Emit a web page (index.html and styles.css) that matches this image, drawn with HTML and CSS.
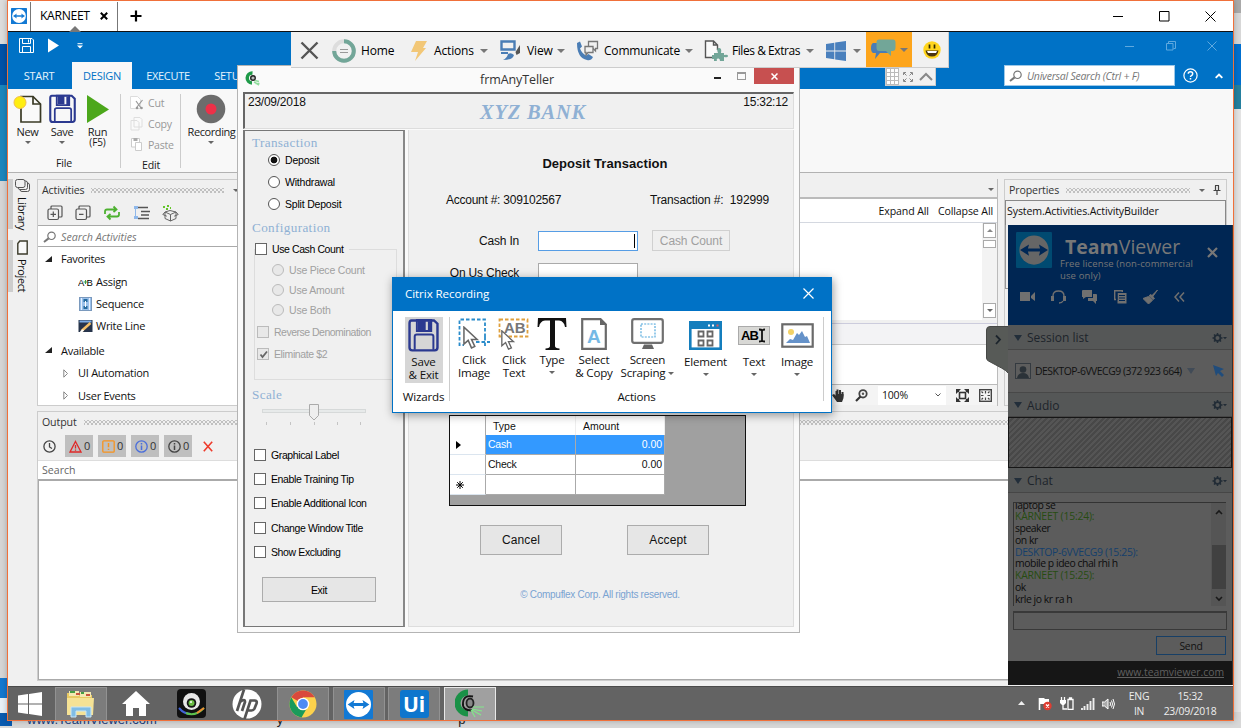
FILE: index.html
```html
<!DOCTYPE html>
<html lang="en">
<head>
<meta charset="utf-8">
<title>KARNEET - TeamViewer</title>
<link rel="stylesheet" href="styles.css">
</head>
<body>
<svg class="defs" aria-hidden="true">
  <symbol id="tv" viewBox="0 0 16 16"><rect width="16" height="16" rx=".6" fill="#1279d4"/><circle cx="8" cy="8" r="6.900" fill="#fff"/><path d="M2 8l3.800-2.500-.5 1.700h5.400l-.5-1.700L14 8l-3.800 2.500.5-1.700H5.300l.5 1.700z" fill="#1279d4"/></symbol>
  <symbol id="floppy" viewBox="0 0 28 30"><path d="M3 1.300h20.500l3.200 3V26q0 2.500-2.500 2.500H3.800q-2.500 0-2.500-2.500V3.800q0-2.500 1.700-2.500z" fill="none" stroke="#2b3990" stroke-width="2.200"/><path d="M8 1h13v10H8zM6 28V16q0-2 2-2h13q2 0 2 2v12" fill="none" stroke="#2b3990" stroke-width="1.800"/><path d="M9 1.500h7V10H9zM18 2h3v9h-3z" fill="#2b3990"/></symbol>
  <symbol id="mag" viewBox="0 0 14 12"><circle cx="8.500" cy="4.800" r="3.700" fill="none" stroke="#777" stroke-width="1.200"/><path d="M5.600 7.400L1 11" stroke="#777" stroke-width="2"/></symbol>
  <symbol id="gear" viewBox="0 0 16 12"><circle cx="5.500" cy="6" r="2.900" fill="none" stroke="#222c36" stroke-width="1.800"/><path d="M5.500 1v2M5.500 9v2M.5 6h2M8.500 6h2M2 2.500l1.300 1.300M9 2.500L7.700 3.800M2 9.500l1.300-1.300M9 9.500L7.700 8.200" stroke="#222c36" stroke-width="1.500"/><path d="M11 5h4l-2 2.300z" fill="#222c36"/></symbol>
  <symbol id="win" viewBox="0 0 24 24"><path d="M0 3.500L10 2v9.500H0zM11 1.900L24 0v11.500H11zM0 12.500h10V22L0 20.500zM11 12.500h13V24l-13-1.900z" fill="currentColor"/></symbol>
  <symbol id="cursor" viewBox="0 0 18 24"><path d="M1 1v18l4.500-4 3.500 8 3.500-1.500-3.500-7.500h6z" fill="#fff" stroke="#666" stroke-width="1.600"/></symbol>
</svg>
<div class="screen">
  <div class="host-left"><i class="hl1"></i><i class="hl2"></i><i class="hl3"></i><i class="hl4"></i><i class="hl5"></i><i class="hl6"></i><i class="hl7"></i></div>
  <div class="host-right"><i class="hr1"></i><i class="hr2"></i><i class="hr3"></i><i class="hr4"></i><i class="hr5"></i></div>
  <div class="host-bottom"><span class="hb1">www.TeamViewer.com</span><span class="hb2">y</span><span class="hb3">p</span></div>

  <div class="remote">
    <header class="tabs">
      <svg class="tv-mini"><use href="#tv"/></svg>
      <div class="tab"><span>KARNEET</span><svg width="8" height="8" viewBox="0 0 8 8"><path d="M.8.8l6.400 6.400M7.200.8L.8 7.200" stroke="#000" stroke-width="2"/></svg><i></i></div>
      <svg class="plus" width="12" height="12" viewBox="0 0 12 12"><path d="M6 .5v11M.5 6h11" stroke="#000" stroke-width="2.200"/></svg>
      <div class="winbtns">
        <svg width="11" height="11"><path d="M0 5.500h10" stroke="#000"/></svg>
        <svg width="11" height="11"><path d="M.5.5h9.500v9.500H.5z" fill="none" stroke="#000"/></svg>
        <svg width="11" height="11"><path d="M.5.5l10 10M10.500.5l-10 10" stroke="#000"/></svg>
      </div>
    </header>

    <main class="desktop">
      <section class="studio">
        <div class="bluebar">
          <div class="quick">
            <svg width="15" height="15" viewBox="0 0 15 15" fill="none" stroke="#fff"><path d="M1 .5h12l1.500 1.500v12.500H.5V.5zM3.500.5v5h8v-5M3.500 14.500V8.500h8v6M9.500 1.500v3"/></svg>
            <svg width="12" height="15" viewBox="0 0 12 15"><path d="M0 .5l11 7-11 7z" fill="#fff"/></svg>
            <svg width="6" height="6" viewBox="0 0 6 6"><path d="M.5.7h5" stroke="#fff"/><path d="M0 2.500h6L3 5.500z" fill="#fff"/></svg>
          </div>
          <nav class="menu"><span class="m1">START</span><span class="m2 on">DESIGN</span><span class="m3">EXECUTE</span><span class="m4">SETUP</span></nav>
          <div class="bluewin">
            <svg width="10" height="10"><path d="M0 5.500h9"/></svg>
            <svg width="10" height="10"><path d="M.5 2.500h6.500v6.500H.5zM2.500 2.500V.5h7v7h-2"/></svg>
            <svg width="10" height="10"><path d="M.5.5l9 9M9.500.5l-9 9"/></svg>
          </div>
          <div class="usearch">
            <div class="ubox"><svg width="14" height="12"><use href="#mag"/></svg><em>Universal Search (Ctrl + F)</em></div>
            <svg width="15" height="15" viewBox="0 0 15 15"><circle cx="7.500" cy="7.500" r="6.600" fill="none" stroke="#fff" stroke-width="1.200"/><path d="M5.300 5.800q0-2 2.200-2t2.200 1.900q0 1.200-1.300 1.900-.9.500-.9 1.400M7.500 10v1.500" fill="none" stroke="#fff" stroke-width="1.500"/></svg>
            <svg width="8" height="6" viewBox="0 0 8 6"><path d="M.7 4.800L4 1.500l3.300 3.300" fill="none" stroke="#fff" stroke-width="1.900"/></svg>
          </div>
        </div>

        <div class="ribbon">
          <div class="rgroup g-file">
            <div class="rrow">
              <div class="rb w-new"><svg width="30" height="30" viewBox="0 0 30 30"><path d="M8 2.500h12l7.500 7.500v18H8z" fill="#fafafa" stroke="#3a3a25" stroke-width="1.700"/><path d="M20 2.500V10h7.500" fill="none" stroke="#3a3a25" stroke-width="1.700"/><circle cx="7" cy="8.500" r="6" fill="#ffee10" stroke="#f2bd4b"/></svg><span>New</span><i class="dd"></i></div>
              <div class="rb w-save"><svg width="27" height="30"><use href="#floppy"/></svg><span>Save</span><i class="dd"></i></div>
              <div class="rb w-run"><svg width="24" height="30" viewBox="0 0 24 30"><path d="M1 1l22 14.500L1 29z" fill="#4ca71b"/></svg><span>Run</span><span class="f5">(F5)</span></div>
            </div>
            <label>File</label>
          </div>
          <div class="rgroup g-edit">
            <div class="er"><svg width="14" height="14" viewBox="0 0 14 14"><path d="M.5.5h7l3 3v9H.5z" fill="#fff" stroke="#ddd"/><path d="M6 5l5 7M12.500 4L7 11" stroke="#999" stroke-width="1.200"/><circle cx="7" cy="12" r="1.300" fill="#999"/><circle cx="11.500" cy="12" r="1.300" fill="#999"/></svg><span>Cut</span></div>
            <div class="er"><svg width="14" height="14" viewBox="0 0 14 14"><path d="M4 .5h6l2 2V10H4z M1 3.500h6l2 2V13H1z" fill="#fafafa" stroke="#dedede"/></svg><span>Copy</span></div>
            <div class="er"><svg width="14" height="14" viewBox="0 0 14 14"><path d="M1.500 1.500h8V10h-8z" fill="#fff" stroke="#ccc"/><path d="M3.500 1h4v3h-4z" fill="#aaa"/><path d="M5.500 5.500h6v8h-6z" fill="#fff" stroke="#ccc"/></svg><span>Paste</span></div>
            <label>Edit</label>
          </div>
          <div class="rgroup g-rec">
            <div class="rb"><svg width="30" height="30" viewBox="0 0 30 30"><circle cx="15" cy="15" r="14.300" fill="#6c6c6c"/><circle cx="15" cy="15" r="5.500" fill="#ee3048"/></svg><span>Recording</span><i class="dd"></i></div>
          </div>
        </div>

        <div class="work">
          <aside class="rail">
            <div class="rt r1"><svg width="15" height="14" viewBox="0 0 15 14"><g fill="#f0f0f0" stroke="#555"><rect x="5" y="4" width="9.500" height="8.500" rx="2"/><rect x="3" y="2" width="9.500" height="8.500" rx="2"/><rect x=".5" y=".5" width="9.500" height="8" rx="2"/></g></svg><span>Library</span></div>
            <div class="rt r2"><svg width="11" height="15" viewBox="0 0 11 15"><path d="M.8 3.500l2-2.500h7.400v13H.8z" fill="#f8f8f8" stroke="#3b3a2a" stroke-width="1.400"/></svg><span>Project</span></div>
          </aside>
          <div class="panes">
            <div class="top">
              <div class="activities">
                <div class="cap"><span>Activities</span><i class="dots"></i><i class="dd"></i></div>
                <div class="tools">
                  <svg width="16" height="16" viewBox="0 0 16 16" fill="none" stroke="#555" stroke-width="1.200"><rect x="1" y="4" width="10.500" height="10.500" rx="1.500"/><path d="M4 4V2q0-1 1-1h9q1 0 1 1v9q0 1-1 1h-2M6.300 6.500v5.500M3.500 9.300h5.500"/></svg>
                  <svg width="16" height="16" viewBox="0 0 16 16" fill="none" stroke="#555" stroke-width="1.200"><rect x="1" y="4" width="10.500" height="10.500" rx="1.500"/><path d="M4 4V2q0-1 1-1h9q1 0 1 1v9q0 1-1 1h-2M4 9.300h4.500"/></svg>
                  <svg width="18" height="16" viewBox="0 0 18 16" fill="none" stroke="#4db130" stroke-width="1.800"><path d="M2 9V6.500q0-2 2-2h9M10.500 1.500l3 3-3 2.500M16 7v2.500q0 2-2 2H5M7.500 9l-3 2.500 3 3"/></svg>
                  <svg width="17" height="16" viewBox="0 0 17 16"><path d="M1 1h4v3H1zM1 11h4v3H1z" fill="#8fb8ea"/><path d="M5 2.500h10M8 6.500h9M8 10h8M5 13.500h11" stroke="#555" stroke-width="1.600"/><path d="M2.500 4v7" stroke="#8fb8ea"/></svg>
                  <svg width="17" height="17" viewBox="0 0 17 17" fill="#eee" stroke="#666"><path d="M3 7l5.500 2.500L14 7v6.500L8.500 16 3 13.500zM8.500 9.500V16M3 7L.8 9.500l4 1.700M14 7l2.200 2.500-4 1.700M3 7l5-1.500L14 7"/><path d="M1 2h2M5 1h2M4 4h2M8 3h1" stroke="#65c52b" stroke-width="2"/></svg>
                </div>
                <div class="asearch"><svg width="14" height="12"><use href="#mag"/></svg><em>Search Activities</em></div>
                <div class="tree">
                  <div class="n0"><svg width="7" height="7"><path d="M7 0v6H0z" fill="#222"/></svg><span>Favorites</span></div>
                  <div class="n1"><svg width="15" height="14" viewBox="0 0 15 14"><text x="0" y="10.500" class="ab">A</text><text x="8.500" y="10.500" class="ab">B</text><path d="M5.500 7h4M7.500 5v4" stroke="#3a9c47"/></svg><span>Assign</span></div>
                  <div class="n1"><svg width="13" height="14" viewBox="0 0 13 14"><rect x=".5" y=".5" width="12" height="13" fill="#9bc1ec" stroke="#7a99bd"/><path d="M2.500 1v12M10.500 1v12" stroke="#e6f1ff"/><path d="M4.500 2h4v3h-4zM4.500 9h4v3h-4z" fill="#266b9f"/><path d="M6.500 4v6" stroke="#fff"/></svg><span>Sequence</span></div>
                  <div class="n1"><svg width="14" height="13" viewBox="0 0 14 13"><path d="M0 0h14v12H0z" fill="#27344b"/><path d="M1 1.500h12" stroke="#7cace5" stroke-width="2"/><path d="M3 11l9-8" stroke="#f4bf66" stroke-width="2.500"/><path d="M2 12l3-2" stroke="#fff" stroke-width="2"/></svg><span>Write Line</span></div>
                  <div class="n0 gap"><svg width="7" height="7"><path d="M7 0v6H0z" fill="#222"/></svg><span>Available</span></div>
                  <div class="n2"><svg width="6" height="9"><path d="M.8.8l3.700 3.700L.8 8.200z" fill="none" stroke="#888"/></svg><span>UI Automation</span></div>
                  <div class="n2"><svg width="6" height="9"><path d="M.8.8l3.700 3.700L.8 8.200z" fill="none" stroke="#888"/></svg><span>User Events</span></div>
                </div>
              </div>
              <div class="designer">
                <div class="dtop"><i class="dd"></i></div>
                <div class="dlinks"><span>Expand All</span><span>Collapse All</span></div>
                <div class="canvas"><div class="sb"><b><i class="up"></i></b><b class="thumb"></b><u></u><b><i class="dd"></i></b></div></div>
                <div class="dhead"></div>
                <div class="dvars"></div>
                <div class="dfoot">
                  <svg width="13" height="15" viewBox="0 0 13 15"><path d="M2 8l2.500 2V3M5.500 8V1.500M8 8V2M10.500 8.500V4" stroke="#333" stroke-width="2" fill="none"/><path d="M0 7l2-1 3 3 0-3h6.500v4L10 14H5z" fill="#333"/></svg>
                  <svg width="13" height="13" viewBox="0 0 13 13"><circle cx="8" cy="4.800" r="3.700" fill="none" stroke="#444" stroke-width="1.800"/><circle cx="8" cy="4.800" r="1.200" fill="#555"/><path d="M5.500 7.500L1 12" stroke="#333" stroke-width="2.200"/></svg>
                  <div class="zoom"><span>100%</span><svg width="6" height="4"><path d="M.5.5L3 3 5.500.5" fill="none" stroke="#555"/></svg></div>
                  <svg width="13" height="13" viewBox="0 0 13 13"><rect x="3.500" y="3.500" width="6" height="6" fill="none" stroke="#333" stroke-width="1.600"/><path d="M0 0h5L0 5zM13 0v5L8 0zM0 13V8l5 5zM13 13H8l5-5z" fill="#333"/><path d="M1 1l3 3M12 1L9 4M1 12l3-3M12 12L9 9" stroke="#333"/></svg>
                  <svg width="13" height="13" viewBox="0 0 13 13"><rect x=".7" y=".7" width="11.600" height="11.600" fill="none" stroke="#444" stroke-width="1.400"/><path d="M6.500 2v2.500M6.500 8.500V11M2 6.500h2.500M8.500 6.500H11M2.500 2.500l1.500 1.500M10.500 2.500L9 4M2.500 10.500L4 9M10.500 10.500L9 9" stroke="#444" stroke-width="1.200"/></svg>
                </div>
              </div>
              <div class="props">
                <div class="cap"><span>Properties</span><i class="dots"></i><i class="dd"></i><svg width="8" height="10"><path d="M2 .5h4M2.500.5v5M5.500.5v5M.5 5.500h7M4 5.500V10" stroke="#444" fill="none" stroke-width="1.200"/></svg></div>
                <div class="pbox">System.Activities.ActivityBuilder</div>
                <div class="pbox2"></div>
              </div>
            </div>
            <div class="output">
              <div class="cap"><span>Output</span><i class="dots"></i></div>
              <div class="otools">
                <svg class="clock" width="13" height="13" viewBox="0 0 13 13" fill="none" stroke="#444" stroke-width="1.300"><circle cx="6.500" cy="6.500" r="5.600"/><path d="M6.500 3v4l2.500 1.500"/></svg>
                <div class="ob"><svg width="13" height="13" viewBox="0 0 13 13"><path d="M6.500 1.500L12 12H1z" fill="none" stroke="#e02828" stroke-width="1.300"/><path d="M6.500 5v3.500M6.500 9.500v1.300" stroke="#e02828" stroke-width="1.300"/></svg>0</div>
                <div class="ob"><svg width="13" height="13" viewBox="0 0 13 13"><rect x=".8" y=".8" width="11.400" height="11.400" rx="1" fill="none" stroke="#f7931e" stroke-width="1.300"/><path d="M6.500 3v4.300M6.500 8.700V10" stroke="#f7931e" stroke-width="1.500"/></svg>0</div>
                <div class="ob"><svg width="13" height="13" viewBox="0 0 13 13"><circle cx="6.500" cy="6.500" r="5.700" fill="none" stroke="#4a6edb" stroke-width="1.300"/><path d="M6.500 5.500V10M6.500 3v1.400" stroke="#4a6edb" stroke-width="1.500"/></svg>0</div>
                <div class="ob"><svg width="13" height="13" viewBox="0 0 13 13"><circle cx="6.500" cy="6.500" r="5.700" fill="none" stroke="#444" stroke-width="1.300"/><path d="M6.500 5.500V10M6.500 3v1.400" stroke="#444" stroke-width="1.500"/></svg>0</div>
                <svg class="ox" width="10" height="11"><path d="M.8.8l8.400 9.400M9.200.8L.8 10.200" stroke="#ee3b2b" stroke-width="1.600"/></svg>
              </div>
              <div class="osearch">Search</div>
              <div class="olist"></div>
            </div>
          </div>
        </div>
      </section>

      <section class="teller">
        <div class="tbar">
          <svg width="15" height="15" viewBox="0 0 15 15"><path d="M7.500 2A5 5 0 0 0 7 12" fill="none" stroke="#1e9a48" stroke-width="3.500"/><circle cx="8" cy="7" r="2.300" fill="#bbb" stroke="#222" stroke-width="1.400"/><path d="M10 9.500l4 1M9 11l5 3M10.500 12.500h4" stroke="#8fdc9c" stroke-width="1.500"/></svg>
          <span>frmAnyTeller</span>
          <div class="tbtn"><i class="min"></i><i class="max"></i><b><svg width="7" height="7"><path d="M.5.5l6 6M6.500.5l-6 6" stroke="#fff" stroke-width="1.500"/></svg></b></div>
        </div>
        <div class="thead"><span class="date">23/09/2018</span><span class="bank">XYZ BANK</span><span class="time">15:32:12</span></div>
        <div class="tbody">
          <div class="opts">
            <h4 class="h1">Transaction</h4>
            <div class="op rad"><i class="r sel"></i>Deposit</div>
            <div class="op rad"><i class="r"></i>Withdrawal</div>
            <div class="op rad"><i class="r"></i>Split Deposit</div>
            <h4 class="h2">Configuration</h4>
            <fieldset>
              <legend><i class="c"></i>Use Cash Count</legend>
              <div class="op sub"><i class="r"></i>Use Piece Count</div>
              <div class="op sub"><i class="r"></i>Use Amount</div>
              <div class="op sub"><i class="r"></i>Use Both</div>
              <div class="op dis first"><i class="c"></i>Reverse Denomination</div>
              <div class="op dis"><i class="c"><svg width="9" height="9"><path d="M1.500 4.500L3.500 7 8 1.500" fill="none" stroke="#666" stroke-width="1.800"/></svg></i>Eliminate $2</div>
            </fieldset>
            <h4 class="h3">Scale</h4>
            <svg class="slider" width="106" height="24" viewBox="0 0 106 24"><rect x=".5" y="5.500" width="103" height="3" fill="#e7eaea" stroke="#d6d9d9"/><path d="M47.500.5h9v11L52 16l-4.500-4.500z" fill="#eee" stroke="#aaa"/><path d="M4.500 18v3M28.500 18v3M52.500 18v3M75.500 18v3M98.500 18v3" stroke="#c4c4c4"/></svg>
            <div class="op chk"><i class="c"></i>Graphical Label</div>
            <div class="op chk"><i class="c"></i>Enable Training Tip</div>
            <div class="op chk"><i class="c"></i>Enable Additional Icon</div>
            <div class="op chk"><i class="c"></i>Change Window Title</div>
            <div class="op chk"><i class="c"></i>Show Excluding</div>
            <div class="btn exit">Exit</div>
          </div>
          <div class="form">
            <h2>Deposit Transaction</h2>
            <div class="acct"><span class="a1">Account #: 309102567</span><span class="a2">Transaction #:&nbsp; 192999</span></div>
            <div class="frow"><label>Cash In</label><i class="inp focus"></i><div class="btn cc">Cash Count</div></div>
            <div class="frow second"><label>On Us Check</label><i class="inp"></i></div>
            <div class="gridbox">
              <div class="gr gh"><i></i><span>Type</span><span>Amount</span></div>
              <div class="gr sel"><i><svg width="5" height="8"><path d="M0 0l5 4-5 4z"/></svg></i><span>Cash</span><span>0.00</span></div>
              <div class="gr"><i></i><span>Check</span><span>0.00</span></div>
              <div class="gr"><i><svg width="8" height="8"><path d="M4 0v8M0 4h8M1.200 1.200l5.600 5.600M6.800 1.200L1.200 6.800" stroke="#000"/></svg></i><span></span><span></span></div>
            </div>
            <div class="fbtns"><div class="btn">Cancel</div><div class="btn">Accept</div></div>
            <div class="copy">© Compuflex Corp. All rights reserved.</div>
          </div>
        </div>
      </section>

      <section class="tvbar">
        <svg class="t-x" width="19" height="19"><path d="M1.500 1.500l16 16M17.500 1.500l-16 16" stroke="#555" stroke-width="2.400"/></svg>
        <svg class="t-home" width="24" height="24" viewBox="0 0 24 24"><circle cx="12" cy="12" r="9.800" fill="none" stroke="#ddd" stroke-width="4"/><path d="M12 2.200A9.800 9.800 0 1 1 2.200 12" fill="none" stroke="#72a698" stroke-width="4"/><path d="M8 10.500h8M8 13.500h8" stroke="#999"/></svg>
        <span class="t1">Home</span>
        <svg class="t-bolt" width="16" height="20" viewBox="0 0 16 20"><path d="M5 0h11l-4 7h3L4 20l3-9H0z" fill="#f2c777"/></svg>
        <span class="t2">Actions</span><i class="dd"></i>
        <svg class="t-view" width="21" height="21" viewBox="0 0 21 21"><path d="M1.500 1.500h13v8h-13z" fill="none" stroke="#4a7db5" stroke-width="2.400"/><path d="M1 12h7v2H1z" fill="#4a7db5"/><path d="M20 5v8l-3.500 2-1-3z" fill="#555"/><path d="M8 14q3-2 6 1-1 5-11 5 4-2 5-6z" fill="#4a7db5"/></svg>
        <span class="t3">View</span><i class="dd"></i>
        <svg class="t-comm" width="23" height="21" viewBox="0 0 23 21"><path d="M1 3l3-1.500 2 5-2 2q2 5 6 7l2.500-1.500 4.500 3q-2 4-6 3Q1 18 1 3z" fill="#4a7db5"/><path d="M12.500 1.500h9v7h-2v2.500l-2.500-2.500h-4.500z" fill="#f1f1f1" stroke="#777" stroke-width="1.300"/><path d="M9 6.500h8v6h-5l-2 2.500v-2.500h-1z" fill="#f1f1f1" stroke="#777" stroke-width="1.300"/></svg>
        <span class="t4">Communicate</span><i class="dd"></i>
        <svg class="t-file" width="24" height="21" viewBox="0 0 24 21"><path d="M9 17.500H1.500V1h8l4 4v5M9.500 1v4h4" fill="#fafafa" stroke="#555" stroke-width="1.400"/><path d="M10 13h4q-2-5 1-5t2 5h3v2q4-1 4 1t-4 1V21h-4q0-3-2-2.500T13 21h-3v-2H8v-4h2z" fill="#72a698"/></svg>
        <span class="t5">Files &amp; Extras</span><i class="dd"></i>
        <svg class="t-win" width="20" height="20"><use href="#win"/></svg><i class="dd wdd"></i>
        <div class="t-chat"><svg width="25" height="21" viewBox="0 0 25 21"><path d="M2 4h17v10H9l-5 6 1-6H2q-2-1-2-5t2-5z" fill="#4a7db5"/><path d="M8 .5h14q2.500 0 2.500 3v5q0 3.500-3 3.500h-1.500v5l-5-5H8q-2.500 0-2.500-3.500v-5q0-3 2.500-3z" fill="#72a698"/></svg><i class="dd"></i></div>
        <svg class="t-smile" width="18" height="18" viewBox="0 0 18 18"><circle cx="9" cy="9" r="8.700" fill="#ffd51c"/><path d="M6.500 3.500v4M11.500 3.500v4" stroke="#332b00" stroke-width="1.700"/><path d="M2.500 9.500h13q-1 6-6.500 6t-6.500-6z" fill="#4b3510"/><path d="M4 10h10l-1 2H5z" fill="#fff"/></svg>
      </section>
      <div class="tvsub"><i class="gridh"></i><svg width="10" height="10"><path d="M.5 3V.5H3M7 .5h2.500V3M.5 7v2.500H3M7 9.500h2.500V7M1 1l2.500 2.500M9 1L6.500 3.500M1 9l2.500-2.500M9 9L6.500 6.500" fill="none" stroke="#888"/></svg><svg width="14" height="9"><path d="M1 8l6-6 6 6" fill="none" stroke="#888" stroke-width="2"/></svg></div>

      <section class="citrix">
        <div class="ctitle"><span>Citrix Recording</span><svg width="11" height="11"><path d="M.5.5l10 10M10.500.5l-10 10" stroke="#fff" stroke-width="1.200"/></svg></div>
        <div class="cbody">
          <div class="cwiz"><div class="cb save"><svg width="31" height="33" viewBox="0 0 28 30"><use href="#floppy" width="28" height="30"/></svg><span>Save<br>&amp; Exit</span></div><label>Wizards</label></div>
          <div class="cact">
            <div class="crow">
              <div class="cb b1"><svg width="32" height="32" viewBox="0 0 32 32"><path d="M27 19V1.500H1.500V27H6M18 24h14M27 19v11" fill="none" stroke="#2a8ccb" stroke-width="1.800" stroke-dasharray="3.500 2"/><use href="#cursor" x="5" y="8" width="17" height="23"/></svg><span>Click<br>Image</span></div>
              <div class="cb b2"><svg width="32" height="32" viewBox="0 0 32 32"><rect x="1.500" y="1.500" width="28" height="17" fill="none" stroke="#dfa03d" stroke-width="1.800" stroke-dasharray="3.500 2"/><text x="6" y="15" class="ab2">AB</text><use href="#cursor" x="3" y="12" width="15" height="20"/></svg><span>Click<br>Text</span></div>
              <div class="cb b3"><svg width="30" height="32" viewBox="0 0 30 32"><path d="M1 0h28l.5 9H28q-1-6-6-6.500h-4V28q0 2 4.500 2.500V32h-14v-1.500Q13 30 13 28V2.500H8Q3 3 2 9H.5z" fill="#111"/></svg><span>Type</span><i class="dd"></i></div>
              <div class="cb b4"><svg width="26" height="32" viewBox="0 0 26 32"><path d="M1.200 1.200h18.300l5.300 5.300v24.300H1.200z" fill="#fff" stroke="#6a6a6a" stroke-width="2.200"/><path d="M19 0l7 7h-7z" fill="#666"/><text x="6" y="25" class="bigA">A</text></svg><span>Select<br>&amp; Copy</span></div>
              <div class="cb b5"><svg width="33" height="32" viewBox="0 0 33 32"><rect x="1.200" y="1.200" width="30.600" height="23.600" rx="2" fill="#fff" stroke="#707070" stroke-width="2.200"/><rect x="10" y="6" width="14" height="13" fill="none" stroke="#54a9dc" stroke-width="1.200" stroke-dasharray="2 1.200"/><path d="M13 26.500h8l2 4.500H11z" fill="#666"/></svg><span>Screen<br>Scraping<i class="dd in"></i></span></div>
              <div class="cb low b6"><svg width="33" height="29" viewBox="0 0 33 29"><rect x="1.300" y="1.300" width="30.400" height="26.400" fill="#fff" stroke="#147ebd" stroke-width="2.600"/><path d="M1 1h31v7H1z" fill="#147ebd"/><path d="M19 4.500h2M23 4.500h2" stroke="#fff" stroke-width="2"/><path d="M27.500 4.500h2" stroke="#e45a5a" stroke-width="2"/><path d="M9.500 10.500h5v5h-5zM18.500 10.500h5v5h-5zM9.500 19.500h5v5h-5zM18.500 19.500h5v5h-5z" fill="none" stroke="#666" stroke-width="1.800"/></svg><span>Element</span><i class="dd"></i></div>
              <div class="cb low b7"><svg width="32" height="29" viewBox="0 0 32 29"><rect x=".5" y="5.500" width="31" height="18" fill="#d8d8d5" stroke="#aaa"/><text x="3" y="19" class="abi">AB</text><path d="M21 8.500q2.500 0 3 1 .5-1 3-1M21 20.500q2.500 0 3-1 .5 1 3 1M24 9v11" fill="none" stroke="#111" stroke-width="1.800"/></svg><span>Text</span><i class="dd"></i></div>
              <div class="cb low b8"><svg width="33" height="29" viewBox="0 0 33 29"><rect x="1.300" y="3.300" width="30.400" height="22.400" fill="#fff" stroke="#6a6a6a" stroke-width="2.200"/><circle cx="10" cy="11" r="3" fill="#f3d267"/><path d="M5 22l4-4 3 1 4-7 2 2 3-4 3 6 2-1 3 7z" fill="#6592c9"/></svg><span>Image</span><i class="dd"></i></div>
            </div>
            <label>Actions</label>
          </div>
        </div>
      </section>

      <svg class="handle" width="23" height="48" viewBox="0 0 23 48"><path d="M22.500.5H4Q.5.500.5 4v28q0 2 2 3l13 7q5 2.500 7 5.500" fill="#575a57" stroke="#464846"/><path d="M10 9.500l4 4-4 4.500" fill="none" stroke="#1c242c" stroke-width="1.800"/></svg>
      <section class="tvpanel">
        <div class="ph">
          <div class="prow"><svg class="plogo" viewBox="0 0 16 16"><rect width="16" height="16" rx=".5" fill="#004a71"/><circle cx="8" cy="8" r="6.500" fill="#666"/><path d="M1.800 8l4-2.500-.5 1.800h5.400l-.5-1.800 4 2.500-4 2.500.5-1.800H5.300l.5 1.800z" fill="#002755"/></svg>
            <div class="ptext"><div class="pname"><b>Team</b>Viewer</div><div class="plic"><div>Free license (non-commercial</div><div>use only)</div></div></div>
            <svg class="px" width="11" height="11"><path d="M1 1l9 9M10 1l-9 9" stroke="#777" stroke-width="2.200"/></svg></div>
          <div class="picons">
            <svg width="15" height="14"><path d="M0 2h10v9H0zM11 6l4-4v9l-4-3z" fill="#707070"/></svg>
            <svg width="15" height="14"><path d="M2 8V6q0-5 5.500-5T13 6v2M12 11q-1 2-4 2" fill="none" stroke="#707070" stroke-width="1.400"/><path d="M0 6h3v5H0zM12 6h3v5h-3z" fill="#707070"/></svg>
            <svg width="15" height="14"><path d="M0 1q0-1 1-1h9v7H4l-3 2V7H0zM6 8h5V4h3q1 0 1 1v6h-1v3l-3-3H6z" fill="#707070"/></svg>
            <svg width="13" height="14"><path d="M2 9.500H.7V.7h7.600V2" fill="none" stroke="#707070" stroke-width="1.400"/><path d="M3.500 3H12.500v10.500h-9z" fill="#707070"/><path d="M5 5.500h6M5 8h6M5 10.500h6M3 3v7" stroke="#002653"/></svg>
            <svg width="15" height="14"><path d="M14.500 0L9.500 7l-1-1zM8 4.500l3.500 4-1.500 1-4-3.800zM5.500 6.500l4 3.800L5.500 14 0 8.500z" fill="#707070" stroke="#707070"/></svg>
            <svg width="11" height="10"><path d="M5 .5L1 5l4 4.500M10 .5L6 5l4 4.500" fill="none" stroke="#707070" stroke-width="1.500"/></svg>
          </div>
        </div>
        <div class="sec"><i class="tri"></i><span>Session list</span><svg width="16" height="12"><use href="#gear"/></svg></div>
        <div class="sess"><svg width="16" height="16"><rect x=".5" y=".5" width="15" height="15" fill="#5d5d5d" stroke="#343a40"/><circle cx="8" cy="6.500" r="3.300" fill="#2b3238"/><path d="M2 15q1-5 6-5t6 5z" fill="#2b3238"/></svg><span>DESKTOP-6VVECG9 (372 923 664)</span><i class="tri"></i><svg width="11" height="12"><path d="M0 0l11 4-4 2 4 4-2 2-4-4-2 3z" fill="#204c7b"/></svg></div>
        <div class="sec"><i class="tri"></i><span>Audio</span><svg width="16" height="12"><use href="#gear"/></svg></div>
        <div class="hatch"></div>
        <div class="sec"><i class="tri"></i><span>Chat</span><svg width="16" height="12"><use href="#gear"/></svg></div>
        <div class="chat">
          <div class="log"><div class="lines"><p>laptop se</p><p class="g">KARNEET (15:24):</p><p>speaker</p><p>on kr</p><p class="b">DESKTOP-6VVECG9 (15:25):</p><p>mobile p ideo chal rhi h</p><p class="g">KARNEET (15:25):</p><p>ok</p><p>krle jo kr ra h</p></div>
            <div class="csb"><svg width="8" height="6"><path d="M1 5l3-3 3 3" fill="none" stroke="#191919" stroke-width="1.600"/></svg><i></i><svg width="8" height="6"><path d="M1 1l3 3 3-3" fill="none" stroke="#191919" stroke-width="1.600"/></svg></div></div>
          <div class="cin"></div>
          <div class="send">Send</div>
        </div>
        <div class="pfoot"><span>www.teamviewer.com</span></div>
      </section>
    </main>

    <footer class="taskbar">
      <div class="tk start"><svg width="24" height="24"><use href="#win"/></svg></div>
      <div class="tk tile"><svg width="30" height="28" viewBox="0 0 30 28"><path d="M1 3h9l2 2h14v20H1z" fill="#e8c962"/><path d="M3 1h10v5H3zM14 2h11v5H14z" fill="#f3e8b2"/><path d="M4 2h5M15 3h3" stroke="#459c44" stroke-width="2"/><path d="M10 4h4M20 5h4" stroke="#c9543e" stroke-width="2"/><path d="M1 8h27l-1 17H1z" fill="#f5e295"/><path d="M5 27V17h20v10h-5v-6H10v6z" fill="#80bde5" stroke="#c8e6f8"/></svg></div>
      <div class="tk"><svg width="28" height="26" viewBox="0 0 28 26"><path d="M14 0l14 13h-4v12h-7v-8h-6v8H4V13H0z" fill="#fff"/></svg></div>
      <div class="tk"><svg width="29" height="29" viewBox="0 0 29 29"><rect width="29" height="29" rx="4" fill="#111"/><path d="M2 19q5 6 12 6" fill="none" stroke="#4264d8" stroke-width="2"/><path d="M9 24q9 4 18-5" fill="none" stroke="#5dc14d" stroke-width="2"/><path d="M20 24l7-5" stroke="#f18b31" stroke-width="2"/><circle cx="14.500" cy="12.500" r="8.500" fill="#e8e8e8"/><circle cx="14.500" cy="14" r="4.800" fill="#151515"/><circle cx="14.500" cy="14" r="3" fill="#6abd45"/><circle cx="14" cy="13" r="1" fill="#fff"/></svg></div>
      <div class="tk"><svg width="30" height="30" viewBox="0 0 30 30"><circle cx="15" cy="15" r="14.500" fill="#fff"/><path d="M12 .5L5 22M8 13q5-4 5 0l-3 9M12.500 30l6-18.500h4q3 0 2 3l-2 5q-1 2-3 2h-4" fill="none" stroke="#555" stroke-width="2.700"/></svg></div>
      <div class="tk tile"><svg width="28" height="28" viewBox="0 0 28 28"><circle cx="14" cy="14" r="13.500" fill="#fcd24c"/><path d="M14 14L2.300 7.200A13.500 13.500 0 0 1 25.700 7.200H14z" fill="#d9493c"/><path d="M2.300 7.200A13.500 13.500 0 0 0 12.500 27.400L18 18 8 17z" fill="#199a5b"/><circle cx="14" cy="14" r="6.300" fill="#fff"/><circle cx="14" cy="14" r="4.900" fill="#4c8bf5"/></svg></div>
      <div class="tk tile"><svg width="29" height="29"><use href="#tv"/></svg></div>
      <div class="tk tile"><div class="ui">Ui</div></div>
      <div class="tk tile act"><svg width="30" height="30" viewBox="0 0 30 30"><path d="M13 3.500a10 10 0 0 0 0 21" fill="none" stroke="#1a9147" stroke-width="6"/><path d="M18 7.500q-9-2-10 6t9 8" fill="none" stroke="#151515" stroke-width="1.800"/><ellipse cx="15" cy="14" rx="3.500" ry="4.500" fill="#888" stroke="#222" stroke-width="1.800"/><path d="M18 18h11M17 20l10 2M17 21l9 5M16 21l4 7" stroke="#81e889" stroke-width="1.200"/></svg></div>
      <div class="tray">
        <svg width="8" height="5"><path d="M0 4h7L3.500 0z" fill="#eee"/></svg>
        <svg class="flag" width="14" height="14"><path d="M1.500 1v12" stroke="#fff" stroke-width="1.600"/><path d="M2 1h4l1 1h4v6H7L6 7H2z" fill="#fff"/><circle cx="9.500" cy="9" r="4.200" fill="#e03d31"/><path d="M8 7.500l3 3M11 7.500l-3 3" stroke="#fff" stroke-width="1.300"/></svg>
        <svg class="plug" width="14" height="13"><path d="M1.500 0v3M4.500 0v3M3 6v6h4M8 2.500h5v10H8zM9.500 2V1h2v1" stroke="#fff" fill="none" stroke-width="1.300"/><path d="M0 3h6v3L4 8H2L0 6z" fill="#fff"/></svg>
        <svg class="sig" width="14" height="12"><path d="M1 12v-2M3.500 12V8M6.500 12V6M9.500 12V3M12.500 12V0" stroke="#eee" stroke-width="1.900"/></svg>
        <svg class="spk" width="14" height="12"><path d="M0 4h2.500L6 1v10L2.500 8H0z" fill="#aaa" stroke="#fff"/><path d="M8 4q1 2 0 4M9.500 2.500q2 3.500 0 7M11 1q3 5 0 10" fill="none" stroke="#fff"/></svg>
        <div class="lang">ENG<br>IN</div><div class="clk">15:32<br>23/09/2018</div>
      </div>
    </footer>
  </div>
</div>
</body>
</html>
```

FILE: styles.css
```css
* { box-sizing: border-box; }
body { margin: 0; font: 11px/14px "Open Sans", "Noto Sans", sans-serif; color: #111; overflow: hidden; }
p, h2, h4 { margin: 0; font-weight: normal; }
svg { flex: none; display: block; }
i, b.thumb { font-style: normal; }
span, label, em { white-space: nowrap; }
.defs { position: absolute; width: 0; height: 0; }
.screen { position: relative; width: 1241px; height: 728px; overflow: hidden; background: #dadada; }

/* host windows visible around the remote session */
.host-left, .host-right { position: absolute; top: 0; display: flex; flex-direction: column; height: 728px; width: 12px; }
.host-left { left: 0; } .host-right { right: 0; width: 8px; }
.host-left i, .host-right i { display: block; }
.hl1 { height: 44px; background: #ddd; } .hl2 { height: 41px; background: #0052a8; } .hl3 { height: 96px; background: #1c86bd; }
.hl4 { height: 497px; background: #d6d6d6; } .hl5 { height: 20px; background: #1478d0; } .hl6 { height: 15px; background: #e9f1f8; } .hl7 { height: 13px; background: #0a5bb0; }
.hr1 { height: 13px; background: #aaa; } .hr2 { height: 31px; background: #d8d8d8; } .hr3 { height: 41px; background: #0070d0; } .hr4 { height: 24px; background: #25809f; } .hr5 { height: 619px; background: #e4e4e4; }
.host-bottom { position: absolute; left: 12px; right: 0; bottom: 0; height: 16px; display: flex; background: #d8d8d8; color: #204080; font: 13px/16px "Liberation Sans", sans-serif; padding-left: 15px; overflow: hidden; }
.host-bottom .hb2 { margin-left: 120px; color: #222; } .host-bottom .hb3 { margin-left: 175px; color: #222; }

.remote { position: absolute; left: 7px; top: 0; width: 1227px; height: 721px; border: 1px solid #f0703a; display: flex; flex-direction: column; background: #fff; box-shadow: 0 0 6px rgba(0,0,0,.25); }
.tabs { height: 31px; border-bottom: 1px solid #111; display: flex; align-items: center; flex: none; }
.tv-mini { width: 16px; height: 16px; margin: 0 3px; }
.tab { position: relative; height: 29px; width: 88px; display: flex; align-items: center; gap: 11px; padding-left: 9px; border: 1px solid #777; border-width: 0 1px; font-size: 12.2px; letter-spacing: -.35px; color: #000; }
.tab span { width: 49px; }
.tab i { position: absolute; left: 38px; bottom: -1px; border: 6px solid transparent; border-top: 0; border-bottom-color: #777; }
.plus { margin-left: 12px; }
.winbtns { margin-left: auto; margin-right: 17px; display: flex; gap: 35px; }

.desktop { position: relative; height: 654px; flex: none; overflow: hidden; background: #f0f0f0; }
.studio { display: flex; flex-direction: column; height: 654px; }
.bluebar { height: 57px; background: #0072c6; display: grid; grid-template: 30px 27px / 1fr auto; flex: none; }
.quick { display: flex; align-items: center; padding: 0 0 3px 11px; gap: 14px; }
.quick svg:last-child { margin-left: 3px; }
.bluewin { grid-column: 2; grid-row: 1; display: flex; gap: 31px; padding: 9px 16px 0 0; justify-content: flex-end; }
.bluewin path { fill: none; stroke: #5fa9df; }
.menu { grid-row: 2; display: flex; color: #e5f2fc; line-height: 28px; letter-spacing: -.28px; }
.menu span { text-align: center; }
.m1 { width: 64px; padding-right: 2px; } .m2 { width: 60px; } .m3 { width: 72px; } .m4 { width: 46px; padding-left: 6px; }
.menu .on { background: #f8f8f8; color: #0072c6; }
.usearch { grid-row: 2; display: flex; align-items: flex-start; padding: 3px 10px 0 0; }
.usearch > svg { margin-top: 3px; } .usearch > svg:last-child { margin: 8px 0 0 17px; }
.ubox { width: 171px; height: 21px; background: #fff; display: flex; align-items: center; gap: 4px; padding-left: 4px; margin-right: 8px; border: 1px solid #9cc8e8; color: #777; font-size: 10.5px; letter-spacing: -.25px; }
em { font-style: italic; }
.dd { display: block; width: 0; height: 0; border: 3px solid transparent; border-top-color: #666; border-bottom: 0; flex: none; }
.up { display: block; border: 3px solid transparent; border-bottom-color: #888; border-top: 0; }
.ribbon { height: 84px; background: #f8f8f8; border-bottom: 1px solid #b2b2b2; display: flex; padding-top: 5px; flex: none; }
.rgroup { height: 74px; border-right: 1px solid #ccc; display: flex; flex-direction: column; align-items: center; color: #1a1a1a; }
.rgroup label { font-size: 10.6px; letter-spacing: -.2px; margin-top: auto; line-height: 12px; }
.g-file { width: 113px; align-items: stretch; } .g-file label { text-align: center; margin-bottom: -1px; }
.g-edit { width: 60px; align-items: flex-start; padding-left: 9px; } .g-edit label { margin-left: 12px; margin-bottom: -3px; }
.g-rec { width: 61px; border: 0; }
.rrow { display: flex; height: 56px; }
.rb { display: flex; flex-direction: column; align-items: center; letter-spacing: -.3px; }
.g-rec .rb { letter-spacing: -.42px; }
.rb span { margin-top: 1px; line-height: 13px; text-align: center; }
.rb .f5 { font-size: 10px; line-height: 11px; margin-top: -1px; letter-spacing: -.1px; }
.rb .dd { margin-top: 3px; }
.w-new { width: 37px; padding-left: 2px; } .w-save { width: 34px; } .w-run { width: 37px; } .rb.w-new svg { margin-left: 1px; }
.er { display: flex; gap: 4px; align-items: center; height: 20.700px; color: #999; }
.er span { font-size: 10.6px; letter-spacing: -.25px; padding-bottom: 2px; }
.er svg { margin-top: -3px; }

.work { flex: 1; display: flex; background: #f0f0f0; padding-top: 6px; min-height: 0; }
.rail { width: 29px; display: flex; flex-direction: column; gap: 11px; }
.rt { border-left: 5px solid #cdcdcd; display: flex; flex-direction: column; align-items: flex-start; padding-left: 2px; gap: 4px; height: 50px; }
.rt span { writing-mode: vertical-rl; letter-spacing: -.4px; }
.r2 { height: 52px; } .r2 svg { margin-left: 2px; }
.panes { flex: 1; display: flex; flex-direction: column; min-width: 0; }
.top { display: flex; height: 227px; flex: none; }
.activities { width: 210px; border: 1px solid #ccc; display: flex; flex-direction: column; }
.cap { height: 20px; display: flex; align-items: center; padding-left: 4px; font-size: 10.6px; letter-spacing: -.12px; color: #333; }
.dots { flex: 1; height: 5px; margin: 0 9px 0 7px; background: radial-gradient(circle, #888 .6px, transparent .8px) 0 0 / 4px 4px, radial-gradient(circle, #888 .6px, transparent .8px) 2px 2px / 4px 4px; }
.activities .cap { padding-right: 7px; }
.tools { display: flex; gap: 12px; padding: 5px 0 0 9px; height: 25px; flex: none; }
.asearch { height: 22px; flex: none; background: #fff; border: 1px solid #aaa; border-width: 1px 0; display: flex; align-items: center; gap: 4px; padding: 1px 0 0 5px; color: #777; }
.asearch em { font-size: 10.7px; }
.tree { flex: 1; background: #fff; padding-top: 1px; min-height: 0; }
.tree > div { display: flex; align-items: center; height: 22.4px; letter-spacing: -.27px; }
.n0 { padding-left: 7px; gap: 9px; } .n0.gap { margin-top: 2px; }
.n1 { padding-left: 40px; } .n1 svg { width: 15px; margin-right: 3px; }
.n2 { padding-left: 25px; gap: 9px; }
.ab { font: 9.500px "Liberation Sans", sans-serif; }
.designer { flex: 1; min-width: 0; display: flex; flex-direction: column; margin-right: 6px; border-right: 1px solid #bbb; }
.dtop { display: flex; justify-content: flex-end; align-items: center; padding: 2px 3px 0 0; border-bottom: 2px solid #bbb; height: 20px; }
.dlinks { height: 24px; background: #fff; display: flex; gap: 9px; justify-content: flex-end; align-items: center; padding-right: 4px; font-size: 10.6px; letter-spacing: -.12px; border-bottom: 1px solid #d4d8e0; }
.canvas { height: 97px; background: #fff; display: flex; justify-content: flex-end; }
.sb { width: 15px; background: #f3f3f3; display: flex; flex-direction: column; gap: 2px; align-items: stretch; padding: 0 1px 2px; }
.sb b { height: 15px; border: 1px solid #aaa; background: #fff; display: grid; place-items: center; }
.sb b.thumb { height: 8px; } .sb u { flex: 1; }
.dhead { height: 22px; border-top: 1px solid #ccd; border-bottom: 1px solid #ccc; background: #f3f3f5; margin-top: 3px; }
.dvars { flex: 1; background: #fff; border-bottom: 1px solid #bbb; }
.dfoot { height: 20px; display: flex; justify-content: flex-end; align-items: center; padding-right: 5px; gap: 10px; background: #f4f4f4; margin-bottom: 1px; }
.zoom { width: 68px; height: 19px; background: #fff; display: flex; align-items: center; justify-content: space-between; padding: 0 5px 0 4px; font-size: 10.5px; letter-spacing: -.2px; }
.props { width: 223px; margin-right: 6px; border: 1px solid #ccc; display: flex; flex-direction: column; }
.props .cap { padding-right: 5px; } .props .cap svg { margin-left: 8px; }
.pbox { height: 25px; border: 1px solid #888; border-bottom: 0; line-height: 20px; padding-left: 1px; font-size: 10.6px; letter-spacing: -.12px; color: #111; }
.pbox2 { height: 64px; border-bottom: 1px solid #999; border-left: 1px solid #999; }
.output { margin: 5px 6px 5px 0; flex: 1; display: flex; flex-direction: column; border: 1px solid #ccc; }
.output .cap { height: 20px; }
.otools { height: 28px; display: flex; align-items: center; padding: 0 0 0 5px; }
.clock { margin-right: 9px; }
.ob { background: #bfbfbf; width: 28px; height: 22px; display: flex; align-items: center; gap: 2px; padding-left: 4px; margin-right: 5px; color: #333; }
.ox { margin-left: 6px; }
.osearch { height: 21px; background: #fff; border-bottom: 2px solid #aaa; border-top: 1px solid #ddd; padding-left: 4px; line-height: 19px; color: #666; font-size: 10.6px; }
.olist { flex: 1; background: #fff; border-left: 1px solid #aaa; border-bottom: 1px solid #aaa; }

/* teller application window */
.teller { position: absolute; left: 229px; top: 33px; width: 563px; height: 568px; border: 1px solid #b4b4b4; background: #fafafa; padding: 0 5px 5px; display: flex; flex-direction: column; font-family: "Liberation Sans", Arial, sans-serif; }
.tbar { height: 26px; display: grid; grid-template-columns: 130px 1fr 130px; align-items: center; justify-items: center; font: 12.5px "Open Sans", sans-serif; letter-spacing: -.1px; color: #333; }
.tbar > svg { justify-self: start; margin-left: 2px; margin-top: -1px; }
.tbar > span { margin-left: -3px; }
.tbtn { display: flex; justify-self: end; align-items: flex-start; height: 26px; padding-top: 1px; }
.tbtn .min { width: 7px; height: 2px; background: #222; margin: 10px 16px 0 0; } .tbtn .max { width: 9px; height: 8px; border: 1px solid #999; border-top-width: 2px; margin: 5px 8px 0 0; }
.tbtn b { width: 40px; height: 16px; background: #c75050; display: grid; place-items: center; margin-top: 1px; }
.thead { height: 37px; border: 2px solid #666; border-right: 1px solid #ddd; border-bottom: 1px solid #ddd; background: #f0f0f0; display: grid; grid-template-columns: 1fr auto 1fr; padding: 0 5px 0 3px; font-size: 12px; letter-spacing: -.25px; color: #111; }
.thead .date { margin-top: 1px; } .thead .time { margin-top: 1px; justify-self: end; }
.bank { font: italic bold 20.5px/37px "Liberation Serif", serif; letter-spacing: .8px; color: #8fb0d4; margin-left: 30px; }
.tbody { flex: 1; display: flex; gap: 3px; padding-top: 1px; }
.opts { width: 162px; border: 2px solid #777; border-top-width: 1px; border-bottom-width: 1px; border-right-color: #888; background: #f0f0f0; display: flex; flex-direction: column; font-size: 10.5px; letter-spacing: -.38px; color: #000; }
.opts h4 { font: 13.2px "Liberation Serif", serif; color: #8fb0d4; letter-spacing: .35px; padding-left: 7px; display: flex; align-items: center; }
.opts .h1 { height: 18px; padding-top: 6px; } .h2 { height: 25px; } .h3 { height: 22px; margin-top: 4px; }
.op { display: flex; align-items: center; gap: 5px; height: 22.2px; white-space: nowrap; }
.r { width: 12px; height: 12px; border: 1px solid #555; border-radius: 50%; background: #fff; flex: none; }
.r.sel { background: radial-gradient(circle, #111 3px, #fff 3.700px); }
.c { width: 12px; height: 12px; border: 1px solid #666; background: #fff; flex: none; display: grid; place-items: center; }
.rad { padding-left: 23px; }
.rad, .sub { letter-spacing: -.2px; }
fieldset { margin: 0 6px 0 9px; padding: 2px 0 0; border: 1px solid #ddd; height: 139px; min-width: 0; }
legend { display: flex; align-items: center; gap: 5px; height: 17px; padding: 0 6px 0 0; margin-left: 0; letter-spacing: -.4px; }
.sub { height: 20.3px; padding-left: 17px; color: #a0a0a0; } .sub .r, .dis .c { border-color: #bbb; background: #e8e8e8; }
.dis { height: 22px; padding-left: 2px; color: #a0a0a0; } .dis.first { margin-top: 1px; }
.first { letter-spacing: -.5px; }
.slider { margin-left: 17px; margin-bottom: 15px; margin-top: -2px; }
.chk { height: 24.3px; padding-left: 9px; }
.btn { border: 1px solid #acacac; background: #e6e6e6; display: grid; place-items: center; }
.exit { width: 114px; height: 25px; margin: 13px 0 0 17px; }
.form { flex: 1; border: 1px solid #ddd; border-top: 0; background: #f0f0f0; display: flex; flex-direction: column; color: #111; }
.form h2 { font: bold 13px/68px "Liberation Sans", sans-serif; height: 59px; text-align: center; padding-left: 8px; letter-spacing: .05px; }
.acct { display: flex; justify-content: space-between; font-size: 12px; padding: 4px 24px 0 37px; height: 41px; letter-spacing: -.15px; }
.acct .a1 { letter-spacing: -.25px; }
.frow { display: flex; align-items: center; height: 21px; }
.frow label { width: 110px; text-align: right; font-size: 12px; letter-spacing: -.2px; margin-right: 19px; }
.inp { width: 100px; height: 20px; background: #fff; border: 1px solid #aaa; }
.inp.focus { border-color: #569de5; position: relative; }
.inp.focus::after { content: ""; position: absolute; right: 2px; top: 2px; width: 1px; height: 14px; background: #000; }
.cc { width: 78px; height: 21px; margin-left: 14px; color: #a0a0a0; border-color: #d0d0d0; background: #efefef; font-size: 12px; letter-spacing: -.1px; }
.second { margin-top: 11px; }
.gridbox { margin: 132px 0 0 40px; width: 297px; height: 91px; border: 1px solid #111; background: #a0a0a0; font-size: 10.5px; letter-spacing: -.25px; }
.gr { display: grid; grid-template-columns: 36px 90px 89px; height: 20px; width: 215px; line-height: 19px; }
.gr > * { background: #fff; border-right: 1px solid #aaa; border-bottom: 1px solid #aaa; padding: 0 2px; }
.gr > i { display: flex; align-items: center; padding-left: 6px; border-bottom-color: #dbe5ef; }
.gh { height: 19px; } .gh > span { border-right-color: #eee; padding-left: 7px; letter-spacing: 0; line-height: 20px; }
.gr:not(.gh) > span:last-child { text-align: right; letter-spacing: -.05px; }
.gr.sel > span { background: #3399ff; color: #fff; }
.fbtns { display: flex; gap: 65px; padding: 19px 0 0 71px; }
.fbtns .btn { width: 82px; height: 30px; font-size: 12px; letter-spacing: .1px; }
.copy { color: #7aa3d2; font-size: 10px; text-align: center; padding-top: 33px; letter-spacing: -.28px; padding-right: 2px; }

/* session toolbar */
.tvbar { position: absolute; left: 283px; top: 0; width: 658px; height: 36px; background: #f1f1f1; border-bottom: 1px solid #ccc; border-right: 1px solid #ccc; display: flex; align-items: center; font-size: 12px; letter-spacing: -.15px; color: #000; padding-top: 2px; }
.tvbar .dd { border-width: 4px; border-bottom: 0; margin-left: 4px; border-top-color: #777; }
.tvbar span { flex: none; }
.t-x { margin-left: 9px; } .t-home { margin: 0 5px 0 13px; } .t1 { width: 34px; } .t-bolt { margin: 0 7px 0 16px; } .t2 { width: 42px; }
.t-view { margin: 0 6px 0 12px; } .t3 { width: 26px; } .t-comm { margin: 0 5px 0 11px; } .t4 { width: 77px; letter-spacing: -.2px; } .t-file { margin: 0 4px 0 11px; } .t5 { width: 70px; letter-spacing: -.45px; }
.t-win { margin-left: 12px; color: #4a80bd; } .tvbar .wdd { margin-left: 7px; }
.t-chat { background: #fda51c; width: 46px; height: 35px; display: flex; align-items: center; padding-left: 5px; margin: -2px 0 0 5px; }
.t-smile { margin-left: 11px; margin-top: -2px; }
.tvsub { position: absolute; left: 877px; top: 36px; width: 51px; height: 18px; background: #f1f1f1; border: 1px solid #ccc; border-top: 0; display: flex; align-items: center; gap: 6px; }
.gridh { width: 13px; height: 17px; margin-right: -2px; background: repeating-linear-gradient(90deg, #bbb 0 1px, transparent 1px 4px), repeating-linear-gradient(#bbb 0 1px, #fff 1px 4px); }

/* recorder dialog */
.citrix { position: absolute; left: 384px; top: 245px; width: 440px; height: 136px; border: 1px solid #0072c6; border-width: 0 1px 1px; background: #fff; box-shadow: 1px 2px 9px rgba(0,0,0,.4); font-size: 11.6px; letter-spacing: -.2px; }
.ctitle { height: 34px; background: #0072c6; color: #fff; display: flex; justify-content: space-between; align-items: center; padding: 0 17px 1px 12px; letter-spacing: -.08px; }
.cbody { display: flex; padding-top: 6px; }
.cwiz { width: 57px; border-right: 1px solid #ccc; height: 84px; display: flex; flex-direction: column; align-items: center; }
.cwiz label, .cact label { margin-top: auto; text-align: center; line-height: 9px; }
.cb { display: flex; flex-direction: column; align-items: center; line-height: 13px; text-align: center; padding-top: 2px; }
.cb span { margin-top: 3px; } .cb .dd { margin-top: 5px; }
.cb.save { background: #d6d6d6; width: 38px; height: 66px; margin-left: 5px; } .cwiz label { margin-left: 5px; }
.cact { width: 374px; height: 84px; border-right: 1px solid #ccc; display: flex; flex-direction: column; }
.crow { display: flex; }
.b1 { width: 43px; padding-left: 5px; } .b2 { width: 42px; } .b3 { width: 34px; } .b4 { width: 50px; } .b5 { width: 57px; } .b6 { width: 59px; } .b7 { width: 38px; } .b8 { width: 48px; }
.crow .cb { padding-top: 1px; flex: none; } .crow .low { padding-top: 4px; } .low span { margin-top: 5px; }
.dd.in { display: inline-block; vertical-align: middle; margin: 0 0 0 3px !important; }
.ab2 { font: bold 15px "Liberation Sans", sans-serif; fill: #777; }
.abi { font: bold 13px "Liberation Sans", sans-serif; letter-spacing: -.8px; }
.bigA { font: bold 19px "Liberation Sans", sans-serif; fill: #75b9e5; }

/* side panel, dimmed */
.handle { position: absolute; left: 978px; top: 294px; }
.tvpanel { position: absolute; left: 1000px; top: 193px; width: 225px; height: 460px; background: #5c5c5c; display: flex; flex-direction: column; border-right: 1px solid #333; color: #222; }
.ph { background: #002653; height: 100px; padding: 7px 14px 0 8px; color: #777; flex: none; }
.prow { display: flex; height: 57px; }
.plogo { width: 36px; height: 36px; }
.ptext { margin-left: 8px; flex: 1; }
.pname { font: 19.5px/29px "Open Sans", "Noto Sans", sans-serif; padding-left: 5px; }
.plic { font-size: 9.5px; line-height: 12px; margin-top: -3px; letter-spacing: .12px; }
.px { margin-top: 15px; }
.picons { display: flex; justify-content: space-between; width: 169px; padding-left: 4px; align-items: center; margin-top: 1px; }
.sec { height: 24.500px; flex: none; background: #555757; border-bottom: 1px solid #464646; display: flex; align-items: center; gap: 5px; padding: 2px 4px 0 6px; font-size: 12px; letter-spacing: 0; color: #1d242b; }
.sec span { flex: 1; padding-top: 1px; }
.tri { width: 0; height: 0; border: 4px solid transparent; border-top: 6px solid #222e3a; border-bottom: 0; flex: none; }
.sess { height: 43px; flex: none; display: flex; align-items: center; gap: 4px; padding-left: 7px; border-bottom: 1px solid #484848; font-size: 10.4px; letter-spacing: -.48px; color: #111; }
.sess span { width: 147px; } .sess .tri { border-top-color: #414b57; margin-left: 1px; } .sess svg:last-child { margin-left: 14px; }
.hatch { height: 51px; flex: none; border: 1px solid #161616; background: repeating-linear-gradient(135deg, #555 0 2px, #484848 2px 4px); }
.chat { flex: 1; padding: 9px 5px 0; display: flex; flex-direction: column; align-items: stretch; }
.log { height: 104px; border: 1px solid #333; border-width: 1px 0 0 1px; display: flex; overflow: hidden; margin-right: 1px; color: #0c0c0c; font-size: 10.4px; }
.lines { flex: 1; margin-top: -3px; padding-left: 1px; letter-spacing: -.45px; line-height: 11.800px; } .lines p { white-space: nowrap; }
.lines .g { color: #274c12; letter-spacing: -.2px; } .lines .b { color: #143f6c; letter-spacing: -.35px; }
.csb { width: 15px; background: #555; display: flex; flex-direction: column; align-items: center; padding: 6px 0 4px; justify-content: space-between; }
.csb i { width: 14px; height: 44px; background: #414141; margin-top: 23px; }
.cin { height: 19px; border: 1px solid #393939; margin-top: 5px; border-width: 2px 1px 1px; }
.send { width: 70px; height: 19px; border: 1px solid #173f66; align-self: flex-end; margin: 6px 1px 0; text-align: center; line-height: 18px; font-size: 10.3px; letter-spacing: -.2px; color: #111; }
.pfoot { height: 24px; background: #161616; text-align: right; padding: 4px 8px 0 0; color: #606060; flex: none; }
.pfoot span { text-decoration: underline; font-size: 10.4px; letter-spacing: -.02px; }

/* taskbar */
.taskbar { height: 34px; background: #636363; border-top: 1px solid #4a4a4a; display: flex; align-items: center; color: #eee; flex: none; overflow: hidden; }
.tk { width: 52px; height: 33px; display: grid; place-items: center; flex: none; margin-right: 3.6px; overflow: hidden; }
.start { width: 43px; color: #fff; padding-left: 1px; }
.tile { background: #7c7c7c; border: 1px solid #929292; border-bottom: 0; }
.act { background: #a0a0a0; border-color: #e8e8e8; }
.ui { width: 29px; height: 28px; border-radius: 3px; background: #0e76cd; color: #fff; font: bold 21px/28px "Open Sans", sans-serif; text-align: center; }
.tray { margin-left: auto; display: flex; align-items: center; padding-right: 15px; font-size: 10.4px; line-height: 15px; text-align: center; letter-spacing: -.25px; }
.flag { margin-left: 12px; } .plug { margin-left: 8px; } .sig { margin-left: 7px; } .spk { margin-left: 7px; }
.lang { margin-left: 12px; width: 22px; } .clk { margin-left: 12px; width: 56px; }
```
